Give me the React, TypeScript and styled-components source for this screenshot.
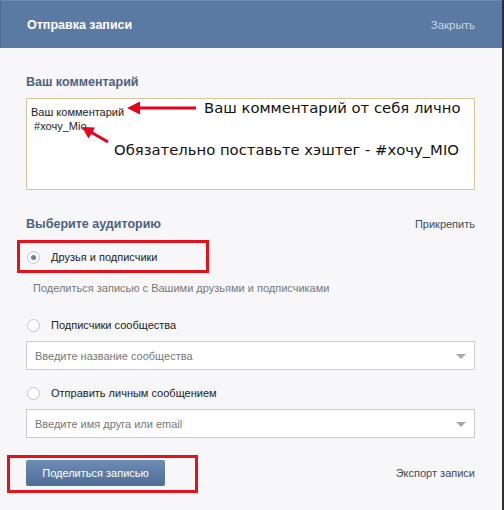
import styled, { createGlobalStyle } from "styled-components";

const GlobalStyle = createGlobalStyle`
  html, body {
    margin: 0;
    padding: 0;
    background: #f7f7f9;
  }
  *, *::before, *::after {
    box-sizing: border-box;
  }
`;

function App() {
  return (
    <>
      <GlobalStyle />
      <Panel>
        <Header>
          <Title>Отправка записи</Title>
          <HeaderLink>Закрыть</HeaderLink>
        </Header>
        <Body>
          <Label>Ваш комментарий</Label>
          <CommentWrap>
            <Comment readOnly defaultValue={"Ваш комментарий\n #хочу_Mio"} />
            <Arrows width="448" height="92" viewBox="0 0 448 92">
              <line x1="170" y1="10" x2="110" y2="10" stroke="#e8001c" strokeWidth="3" />
              <polygon points="101,10 114,3.5 114,16.5" fill="#e8001c" />
              <line x1="82" y1="44" x2="63" y2="33" stroke="#e8001c" strokeWidth="3" />
              <polygon points="56,29 69,29.5 62.5,40.5" fill="#e8001c" />
            </Arrows>
            <Note $top={1} $left={178}>
              Ваш комментарий от себя лично
            </Note>
            <Note $top={43} $left={88}>
              Обязательно поставьте хэштег - #хочу_MIO
            </Note>
          </CommentWrap>

          <SectionRow>
            <Label>Выберите аудиторию</Label>
            <TextLink>Прикрепить</TextLink>
          </SectionRow>

          <RadioRow $marked $gap={15}>
            <Radio $checked />
            <RadioText>Друзья и подписчики</RadioText>
          </RadioRow>
          <Hint>Поделиться записью с Вашими друзьями и подписчиками</Hint>

          <RadioRow $gap={20}>
            <Radio />
            <RadioText>Подписчики сообщества</RadioText>
          </RadioRow>
          <Select>
            <span>Введите название сообщества</span>
            <Caret />
          </Select>

          <RadioRow $gap={13}>
            <Radio />
            <RadioText>Отправить личным сообщением</RadioText>
          </RadioRow>
          <Select>
            <span>Введите имя друга или email</span>
            <Caret />
          </Select>

          <Footer>
            <ButtonWrap>
              <ShareButton>Поделиться записью</ShareButton>
            </ButtonWrap>
            <TextLink>Экспорт записи</TextLink>
          </Footer>
        </Body>
      </Panel>
    </>
  );
}

const Panel = styled.div`
  width: 504px;
  height: 510px;
  background: #f7f7f9;
  border-right: 2px solid #2e2e2e;
  font-family: "Liberation Sans", Arial, sans-serif;
  font-size: 11px;
  color: #222;
  overflow: hidden;
`;

const Header = styled.div`
  height: 48px;
  padding: 0 27px 0 26px;
  display: flex;
  align-items: center;
  justify-content: space-between;
  background: #5a7aa4;
  border-left: 1px solid #4d6b92;
  border-top: 1px solid #6a89b0;
`;

const Title = styled.div`
  color: #fff;
  font-weight: bold;
  font-size: 12.5px;
`;

const HeaderLink = styled.div`
  color: #c9d6e6;
  font-size: 11.5px;
`;

const Body = styled.div`
  padding: 26px 27px 0 26px;
`;

const Label = styled.div`
  color: #4d6282;
  font-weight: bold;
  font-size: 12.5px;
  line-height: 16px;
  margin-bottom: 8px;
`;

const CommentWrap = styled.div`
  position: relative;
  height: 92px;
`;

const Comment = styled.textarea`
  display: block;
  width: 100%;
  height: 92px;
  margin: 0;
  padding: 6px 4px;
  resize: none;
  border: 1px solid #d6c596;
  background: #fff;
  font-family: "Liberation Sans", Arial, sans-serif;
  font-size: 11px;
  line-height: 14px;
  color: #222;
  outline: none;
`;

const Arrows = styled.svg`
  position: absolute;
  top: 0;
  left: 0;
`;

const Note = styled.div<{ $top: number; $left: number }>`
  position: absolute;
  top: ${(p) => p.$top}px;
  left: ${(p) => p.$left}px;
  font-family: "DejaVu Sans", Verdana, sans-serif;
  font-size: 14.8px;
  line-height: 18px;
  color: #111;
  white-space: nowrap;
`;

const SectionRow = styled.div`
  display: flex;
  justify-content: space-between;
  align-items: baseline;
  margin-top: 26px;

  & > ${Label} {
    margin-bottom: 0;
  }
`;

const TextLink = styled.div`
  color: #3c4a5e;
  font-size: 11px;
`;

const RadioRow = styled.div<{ $marked?: boolean; $gap: number }>`
  position: relative;
  display: flex;
  align-items: center;
  height: 20px;
  margin-top: ${(p) => p.$gap}px;
  padding-left: 1px;

  &::before {
    content: "";
    display: ${(p) => (p.$marked ? "block" : "none")};
    position: absolute;
    left: -9px;
    top: -7px;
    width: 192px;
    height: 33px;
    border: 3px solid #e5121c;
  }
`;

const Radio = styled.span<{ $checked?: boolean }>`
  position: relative;
  width: 13px;
  height: 13px;
  border-radius: 50%;
  border: 1px solid #bfc6cf;
  background: #fff;
  margin-right: 11px;

  &::after {
    content: "";
    display: ${(p) => (p.$checked ? "block" : "none")};
    position: absolute;
    left: 3px;
    top: 3px;
    width: 5px;
    height: 5px;
    border-radius: 50%;
    background: #6b7f99;
  }
`;

const RadioText = styled.span`
  color: #222;
`;

const Hint = styled.div`
  color: #777;
  margin-top: 14px;
  padding-left: 7px;
  line-height: 14px;
`;

const Select = styled.div`
  display: flex;
  align-items: center;
  justify-content: space-between;
  height: 29px;
  margin-top: 6px;
  padding: 0 8px 0 8px;
  background: #fff;
  border: 1px solid #c9ccd2;
  color: #777;
`;

const Caret = styled.span`
  width: 0;
  height: 0;
  border-left: 5px solid transparent;
  border-right: 5px solid transparent;
  border-top: 5px solid #a8a8a8;
  margin-top: 2px;
`;

const Footer = styled.div`
  display: flex;
  align-items: center;
  justify-content: space-between;
  margin-top: 22px;
`;

const ButtonWrap = styled.div`
  position: relative;
  width: 139px;

  &::before {
    content: "";
    position: absolute;
    left: -19px;
    top: -5px;
    width: 191px;
    height: 38px;
    border: 3px solid #e5121c;
  }
`;

const ShareButton = styled.button`
  position: relative;
  display: block;
  width: 139px;
  height: 26px;
  border: 0;
  border-radius: 2px;
  background: linear-gradient(#6e8db4, #4e6d96);
  color: #fff;
  font-family: "Liberation Sans", Arial, sans-serif;
  font-size: 11px;
  padding: 0;
`;

export default App;
